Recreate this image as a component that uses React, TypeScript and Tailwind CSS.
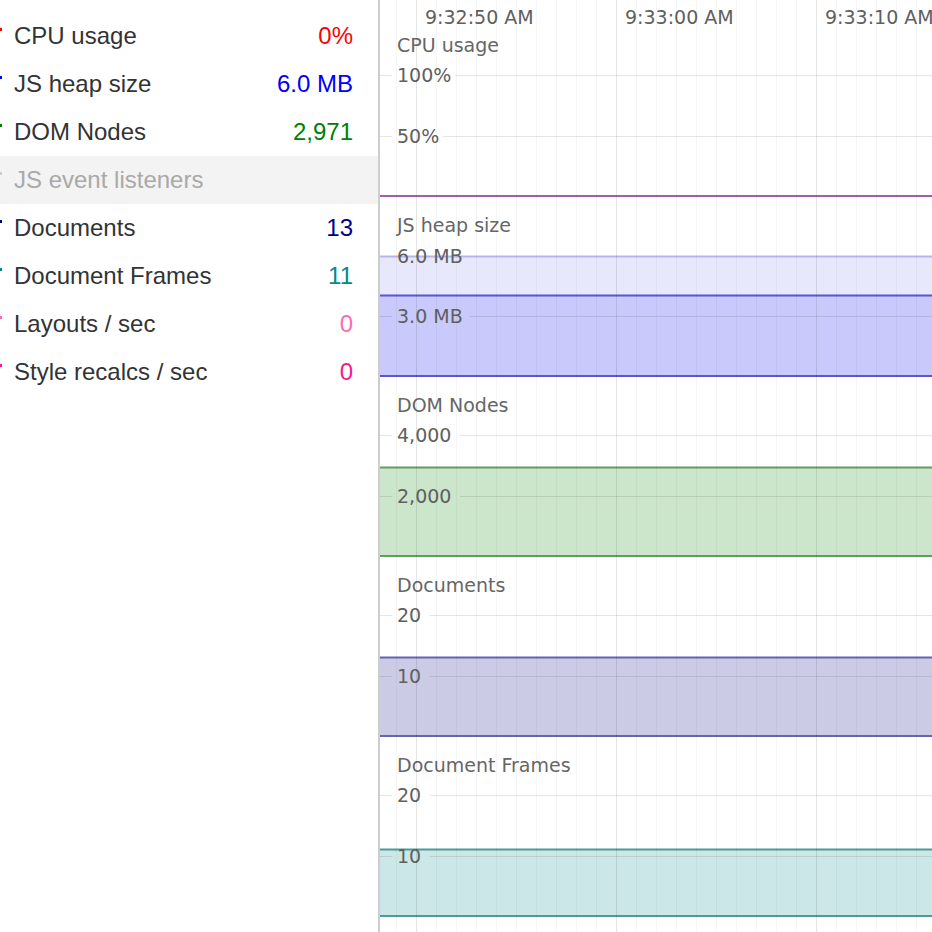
// @ts-nocheck
import React from 'react';

const metrics = [
  { label: 'CPU usage', value: '0%', color: '#ff0000' },
  { label: 'JS heap size', value: '6.0 MB', color: '#0000ff' },
  { label: 'DOM Nodes', value: '2,971', color: '#008000' },
  { label: 'JS event listeners', value: '', color: '#cccccc', disabled: true },
  { label: 'Documents', value: '13', color: '#00008b' },
  { label: 'Document Frames', value: '11', color: '#008b8b' },
  { label: 'Layouts / sec', value: '0', color: '#ff69b4' },
  { label: 'Style recalcs / sec', value: '0', color: '#ff1493' },
];

// each chart is 180px tall; grid rows sit at 58 and 119, zero at 180
const charts = [
  {
    title: 'CPU usage',
    grid: [
      { y: 58, label: '100%', gap: 75 },
      { y: 119, label: '50%', gap: 63 },
    ],
    areas: [],
    baseline: '#a35ea9',
  },
  {
    title: 'JS heap size',
    grid: [
      { y: 59, label: '6.0 MB', gap: 90 },
      { y: 119, label: '3.0 MB', gap: 90 },
    ],
    areas: [
      { top: 59, fill: '#e8e8fc', stroke: '#b4b4f2' },
      { top: 98, fill: '#c9c9fb', stroke: '#5757d3' },
    ],
    baseline: '#5757d3',
  },
  {
    title: 'DOM Nodes',
    grid: [
      { y: 58, label: '4,000', gap: 80 },
      { y: 119, label: '2,000', gap: 80 },
    ],
    areas: [{ top: 90, fill: '#cce6cc', stroke: '#5e9e5e' }],
    baseline: '#5e9e5e',
  },
  {
    title: 'Documents',
    grid: [
      { y: 58, label: '20', gap: 50 },
      { y: 119, label: '10', gap: 50 },
    ],
    areas: [{ top: 100, fill: '#cbcbe6', stroke: '#6464b0' }],
    baseline: '#6464b0',
  },
  {
    title: 'Document Frames',
    grid: [
      { y: 58, label: '20', gap: 50 },
      { y: 119, label: '10', gap: 50 },
    ],
    areas: [{ top: 112, fill: '#cce7e7', stroke: '#4e9a9a' }],
    baseline: '#4e9a9a',
  },
];

const W = 552;
const labelFont = { fontFamily: '"DejaVu Sans", sans-serif', fontSize: 19 };

function Chart({ chart }) {
  return (
    <svg width={W} height={180} className="block shrink-0">
      {chart.areas.map((a, i) => (
        <g key={i}>
          <rect x={0} y={a.top} width={W} height={180 - a.top} fill={a.fill} />
        </g>
      ))}
      {chart.grid.map((g, i) => (
        <g key={i}>
          <line x1={0} x2={12} y1={g.y + 0.5} y2={g.y + 0.5} stroke="rgba(0,0,0,0.1)" />
          <line x1={g.gap} x2={W} y1={g.y + 0.5} y2={g.y + 0.5} stroke="rgba(0,0,0,0.1)" />
        </g>
      ))}
      {chart.areas.map((a, i) => (
        <line key={i} x1={0} x2={W} y1={a.top + 0.5} y2={a.top + 0.5} stroke={a.stroke} strokeWidth={2} />
      ))}
      <line x1={0} x2={W} y1={179} y2={179} stroke={chart.baseline} strokeWidth={2} />
      <text x={17} y={28} dominantBaseline="central" fill="#666" style={labelFont}>
        {chart.title}
      </text>
      {chart.grid.map((g, i) => (
        <text key={i} x={17} y={g.y} dominantBaseline="central" fill="#5f5f5f" style={labelFont}>
          {g.label}
        </text>
      ))}
    </svg>
  );
}

function VerticalGrid() {
  const lines = [];
  for (let x = 16; x < W; x += 20) {
    const major = (x - 36) % 200 === 0;
    lines.push(
      <line
        key={x}
        x1={x + 0.5}
        x2={x + 0.5}
        y1={0}
        y2={932}
        stroke={major ? 'rgba(0,0,0,0.1)' : 'rgba(0,0,0,0.04)'}
      />
    );
  }
  return (
    <svg width={W} height={932} className="pointer-events-none absolute left-0 top-0">
      {lines}
    </svg>
  );
}

export default function App() {
  return (
    <div className="flex h-[932px] w-[932px] overflow-hidden bg-white">
      <div className="w-[378px] shrink-0 pt-3 font-['Liberation_Sans',sans-serif] text-[24px]">
        {metrics.map((m) => (
          <div
            key={m.label}
            className={
              'relative flex h-12 items-center justify-between pl-[14px] pr-[25px] ' +
              (m.disabled ? 'bg-[#f3f3f3] text-[#a9a9a9]' : 'text-[#333]')
            }
          >
            <span className="absolute left-0 top-4 h-[3px] w-[2px]" style={{ backgroundColor: m.color }} />
            <span>{m.label}</span>
            <span style={{ color: m.color }}>{m.value}</span>
          </div>
        ))}
      </div>
      <div className="w-[2px] shrink-0 bg-[#cdcdcd]" />
      <div className="relative flex-1 overflow-hidden">
        <div className="flex flex-col pt-[17px]">
          {charts.map((c) => (
            <Chart key={c.title} chart={c} />
          ))}
        </div>
        <VerticalGrid />
        <svg width={W} height={34} className="pointer-events-none absolute left-0 top-0">
          {['9:32:50 AM', '9:33:00 AM', '9:33:10 AM'].map((t, i) => (
            <text key={t} x={45 + i * 200} y={17} dominantBaseline="central" fill="#5f5f5f" style={labelFont}>
              {t}
            </text>
          ))}
        </svg>
      </div>
    </div>
  );
}
